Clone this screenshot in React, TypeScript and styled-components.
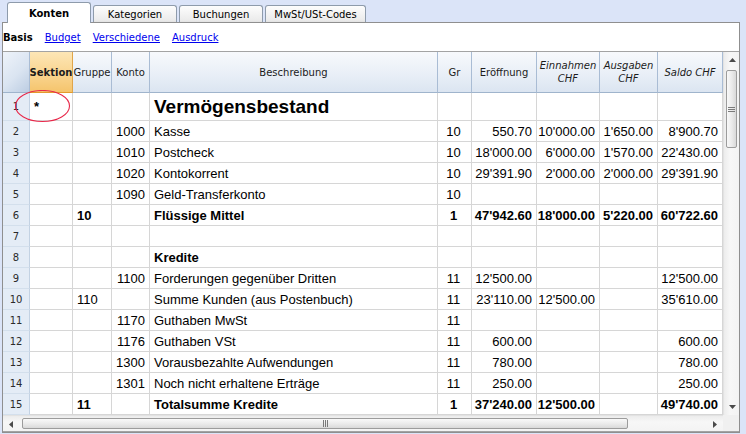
import React from 'react';
import styled, { createGlobalStyle, css } from 'styled-components';

const UI = `"DejaVu Sans", Verdana, sans-serif`;
const CELL = `"Liberation Sans", Arial, sans-serif`;

const Global = createGlobalStyle`
  html, body { margin: 0; padding: 0; background: #dbe4f8; }
  body { width: 746px; height: 434px; overflow: hidden; }
  * { box-sizing: border-box; }
`;

const Page = styled.div`
  width: 746px;
  height: 434px;
  background: #dbe4f8;
  display: flex;
  flex-direction: column;
  font-family: ${UI};
`;

const TabStrip = styled.div`
  height: 22px;
  display: flex;
  align-items: flex-end;
  gap: 2px;
  padding-left: 7px;
  position: relative;
  z-index: 2;
`;

const Tab = styled.div<{ $active?: boolean; $w: number }>`
  width: ${(p) => p.$w}px;
  height: ${(p) => (p.$active ? 21 : 17)}px;
  margin-bottom: ${(p) => (p.$active ? -1 : 0)}px;
  border: 1px solid #8e9bab;
  border-bottom: none;
  border-radius: 3px 3px 0 0;
  display: flex;
  align-items: center;
  justify-content: center;
  font-size: 10px;
  color: #000;
  font-weight: ${(p) => (p.$active ? 700 : 400)};
  padding-top: ${(p) => (p.$active ? 0 : 1)}px;
  background: ${(p) =>
    p.$active ? '#ffffff' : 'linear-gradient(#fdfdfd, #ececec 85%, #e2e2e2)'};
`;

const Panel = styled.div`
  margin-left: 2px;
  width: 738px;
  height: 411px;
  border: 1px solid #8f8f8f;
  background: #fff;
  display: flex;
  flex-direction: column;
  position: relative;
  z-index: 1;
`;

const SubTabs = styled.div`
  height: 28px;
  display: flex;
  align-items: center;
  gap: 12px;
  padding-left: 0;
  font-size: 10px;
`;

const SubTab = styled.span<{ $current?: boolean }>`
  ${(p) =>
    p.$current
      ? css`
          font-weight: 700;
          color: #000;
        `
      : css`
          color: #0000ee;
          text-decoration: underline;
        `}
`;

const GridFrame = styled.div`
  display: grid;
  grid-template-columns: 720px 16px;
  grid-template-rows: 363px 16px;
  border-top: 1px solid #a3a3a3;
  border-bottom: 1px solid #a3a3a3;
  position: relative;
`;

const Sheet = styled.div`
  display: grid;
  grid-template-columns: 27px 43px 39px 38px 288px 34px 65px 63px 58px 65px;
  grid-template-rows: 41px 28px repeat(14, 21px);
  overflow: hidden;
`;

const Corner = styled.div`
  background: linear-gradient(135deg, #eef3fa 0%, #dae4f1 55%, #bccde2 100%);
  border-right: 1px solid #a9bcd4;
  border-bottom: 1px solid #9fb4cc;
`;

const HeadCell = styled.div<{ $italic?: boolean; $accent?: boolean }>`
  display: flex;
  align-items: center;
  justify-content: center;
  text-align: center;
  font-size: 10px;
  line-height: 13px;
  white-space: nowrap;
  overflow: hidden;
  font-style: ${(p) => (p.$italic ? 'italic' : 'normal')};
  font-weight: ${(p) => (p.$accent ? 700 : 400)};
  color: #1b1b1b;
  border-right: 1px solid ${(p) => (p.$accent ? '#e0a54a' : '#a9bcd4')};
  border-bottom: 1px solid ${(p) => (p.$accent ? '#e39a2c' : '#9fb4cc')};
  background: ${(p) =>
    p.$accent
      ? 'linear-gradient(#fde6b6, #f9d38c 60%, #f5c46c)'
      : 'linear-gradient(#f7f9fc, #e9eff7 55%, #dbe5f1)'};
`;

const RowNum = styled.div`
  display: flex;
  align-items: center;
  justify-content: center;
  font-size: 10px;
  color: #2a2a2a;
  background: #e4ecf6;
  border-right: 1px solid #c3d2e3;
  border-bottom: 1px solid #d3dfec;
`;

const Cell = styled.div<{ $align?: 'left' | 'right' | 'center'; $bold?: boolean; $big?: boolean }>`
  display: flex;
  align-items: center;
  justify-content: ${(p) =>
    p.$align === 'right' ? 'flex-end' : p.$align === 'center' ? 'center' : 'flex-start'};
  padding: 0 4px 0 ${(p) => (p.$align === 'left' ? 4 : 2)}px;
  font-family: ${CELL};
  font-size: ${(p) => (p.$big ? 19 : 13)}px;
  font-weight: ${(p) => (p.$bold || p.$big ? 700 : 400)};
  color: #000;
  white-space: nowrap;
  overflow: hidden;
  border-right: 1px solid #d6d6d6;
  border-bottom: 1px solid #d6d6d6;
`;

const VScroll = styled.div`
  display: flex;
  flex-direction: column;
  background: linear-gradient(90deg, #ececec, #f7f7f7 40%, #f3f3f3);
  border-left: 1px solid #e2e2e2;
`;

const HScroll = styled.div`
  display: flex;
  background: linear-gradient(#ececec, #f7f7f7 40%, #f3f3f3);
  border-top: 1px solid #e2e2e2;
`;

const ScrollCorner = styled.div`
  background: #f0f0f0;
`;

const Arrow = styled.div`
  width: 16px;
  height: 16px;
  flex: none;
  display: flex;
  align-items: center;
  justify-content: center;
`;

const Track = styled.div<{ $vertical?: boolean }>`
  flex: 1;
  display: flex;
  flex-direction: ${(p) => (p.$vertical ? 'column' : 'row')};
  padding: ${(p) => (p.$vertical ? '2px 2px' : '2px 3px')};
`;

const Thumb = styled.div<{ $vertical?: boolean; $size: number }>`
  ${(p) =>
    p.$vertical
      ? css`
          height: ${p.$size}px;
          width: 100%;
          background: linear-gradient(90deg, #f9f9f9, #eaeaea 55%, #d9d9d9);
        `
      : css`
          width: ${p.$size}px;
          height: 100%;
          background: linear-gradient(#f9f9f9, #eaeaea 55%, #d9d9d9);
        `}
  border: 1px solid #9c9c9c;
  border-radius: 2px;
  display: flex;
  align-items: center;
  justify-content: center;
`;

const Annotation = styled.svg`
  position: absolute;
  left: 12px;
  top: 38px;
  pointer-events: none;
`;

const cols = ['Sektion', 'Gruppe', 'Konto', 'Beschreibung', 'Gr', 'Eröffnung'];

type Row = {
  sek?: string;
  grp?: string;
  konto?: string;
  desc?: string;
  gr?: string;
  a?: string;
  b?: string;
  c?: string;
  d?: string;
  bold?: boolean;
  big?: boolean;
  descBold?: boolean;
};

const rows: Row[] = [
  { sek: '*', desc: 'Vermögensbestand', big: true },
  { konto: '1000', desc: 'Kasse', gr: '10', a: '550.70', b: "10'000.00", c: "1'650.00", d: "8'900.70" },
  { konto: '1010', desc: 'Postcheck', gr: '10', a: "18'000.00", b: "6'000.00", c: "1'570.00", d: "22'430.00" },
  { konto: '1020', desc: 'Kontokorrent', gr: '10', a: "29'391.90", b: "2'000.00", c: "2'000.00", d: "29'391.90" },
  { konto: '1090', desc: 'Geld-Transferkonto', gr: '10' },
  { grp: '10', desc: 'Flüssige Mittel', gr: '1', a: "47'942.60", b: "18'000.00", c: "5'220.00", d: "60'722.60", bold: true },
  {},
  { desc: 'Kredite', descBold: true },
  { konto: '1100', desc: 'Forderungen gegenüber Dritten', gr: '11', a: "12'500.00", d: "12'500.00" },
  { grp: '110', desc: 'Summe Kunden (aus Postenbuch)', gr: '11', a: "23'110.00", b: "12'500.00", d: "35'610.00" },
  { konto: '1170', desc: 'Guthaben MwSt', gr: '11' },
  { konto: '1176', desc: 'Guthaben VSt', gr: '11', a: '600.00', d: '600.00' },
  { konto: '1300', desc: 'Vorausbezahlte Aufwendungen', gr: '11', a: '780.00', d: '780.00' },
  { konto: '1301', desc: 'Noch nicht erhaltene Erträge', gr: '11', a: '250.00', d: '250.00' },
  { grp: '11', desc: 'Totalsumme Kredite', gr: '1', a: "37'240.00", b: "12'500.00", d: "49'740.00", bold: true },
];

const Tri = ({ dir }: { dir: 'up' | 'down' | 'left' | 'right' }) => {
  const pts = {
    up: '0,4 3.5,0 7,4',
    down: '0,0 3.5,4 7,0',
    left: '4,0 0,3.5 4,7',
    right: '0,0 4,3.5 0,7',
  }[dir];
  const vert = dir === 'up' || dir === 'down';
  return (
    <svg width={vert ? 7 : 4} height={vert ? 4 : 7} viewBox={vert ? '0 0 7 4' : '0 0 4 7'}>
      <polygon points={pts} fill="#4a4a4a" />
    </svg>
  );
};

const Grip = ({ vertical }: { vertical?: boolean }) =>
  vertical ? (
    <svg width="7" height="7" viewBox="0 0 7 7">
      <path d="M0 1.5h7M0 3.5h7M0 5.5h7" stroke="#7a7a7a" strokeWidth="1" />
    </svg>
  ) : (
    <svg width="7" height="7" viewBox="0 0 7 7">
      <path d="M1.5 0v7M3.5 0v7M5.5 0v7" stroke="#7a7a7a" strokeWidth="1" />
    </svg>
  );

export default function App() {
  return (
    <Page>
      <Global />
      <TabStrip>
        <Tab $active $w={84}>Konten</Tab>
        <Tab $w={84}>Kategorien</Tab>
        <Tab $w={84}>Buchungen</Tab>
        <Tab $w={101}>MwSt/USt-Codes</Tab>
      </TabStrip>
      <Panel>
        <SubTabs>
          <SubTab $current>Basis</SubTab>
          <SubTab>Budget</SubTab>
          <SubTab>Verschiedene</SubTab>
          <SubTab>Ausdruck</SubTab>
        </SubTabs>
        <GridFrame>
          <Sheet>
            <Corner />
            {cols.map((c) => (
              <HeadCell key={c} $accent={c === 'Sektion'}>
                {c}
              </HeadCell>
            ))}
            <HeadCell $italic>
              Einnahmen
              <br />
              CHF
            </HeadCell>
            <HeadCell $italic>
              Ausgaben
              <br />
              CHF
            </HeadCell>
            <HeadCell $italic>Saldo CHF</HeadCell>
            {rows.map((r, i) => (
              <React.Fragment key={i}>
                <RowNum>{i + 1}</RowNum>
                <Cell $align="left" $bold>
                  {r.sek}
                </Cell>
                <Cell $align="left" $bold={r.bold}>
                  {r.grp}
                </Cell>
                <Cell $align="right">{r.konto}</Cell>
                <Cell $align="left" $bold={r.bold || r.descBold} $big={r.big}>
                  {r.desc}
                </Cell>
                <Cell $align="center" $bold={r.bold}>
                  {r.gr}
                </Cell>
                <Cell $align="right" $bold={r.bold}>
                  {r.a}
                </Cell>
                <Cell $align="right" $bold={r.bold}>
                  {r.b}
                </Cell>
                <Cell $align="right" $bold={r.bold}>
                  {r.c}
                </Cell>
                <Cell $align="right" $bold={r.bold}>
                  {r.d}
                </Cell>
              </React.Fragment>
            ))}
          </Sheet>
          <VScroll>
            <Arrow>
              <Tri dir="up" />
            </Arrow>
            <Track $vertical>
              <Thumb $vertical $size={78}>
                <Grip vertical />
              </Thumb>
            </Track>
            <Arrow>
              <Tri dir="down" />
            </Arrow>
          </VScroll>
          <HScroll>
            <Arrow>
              <Tri dir="left" />
            </Arrow>
            <Track>
              <Thumb $size={606}>
                <Grip />
              </Thumb>
            </Track>
            <Arrow>
              <Tri dir="right" />
            </Arrow>
          </HScroll>
          <ScrollCorner />
          <Annotation width="56" height="33" viewBox="0 0 56 33">
            <ellipse cx="27.5" cy="16" rx="27" ry="15.5" fill="none" stroke="#e8284a" strokeWidth="1.1" />
          </Annotation>
        </GridFrame>
      </Panel>
    </Page>
  );
}
